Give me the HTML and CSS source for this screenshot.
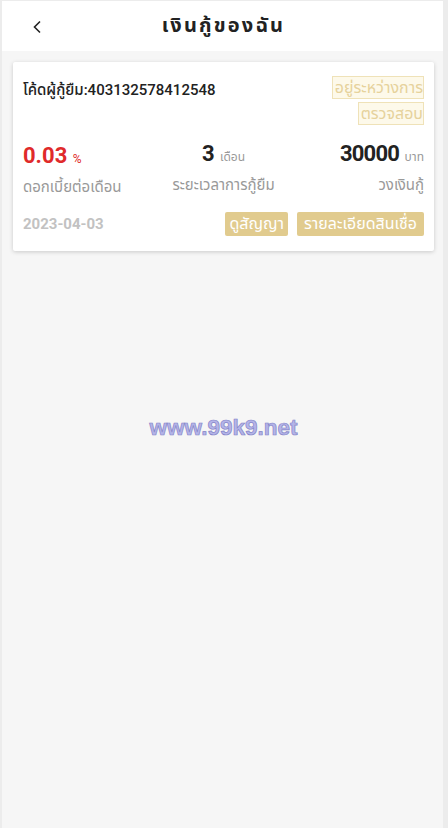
FILE: index.html
```html
<!DOCTYPE html>
<html lang="th">
<head>
<meta charset="utf-8">
<meta name="viewport" content="width=device-width, initial-scale=1">
<title>เงินกู้ของฉัน</title>
<link rel="stylesheet" href="styles.css">
</head>
<body>
<div class="app">
  <header class="topbar">
    <span class="back" aria-label="back">
      <svg width="12" height="14" viewBox="0 0 12 14"><path d="M8 1.5 L2.5 7 L8 12.5" fill="none" stroke="#222" stroke-width="1.6"/></svg>
    </span>
    <h1 class="title">เงินกู้ของฉัน</h1>
  </header>
  <main class="content">
    <section class="card">
      <div class="row-top">
        <div class="code">โค้ดผู้กู้ยืม:403132578412548</div>
        <div class="status"><span class="status-tag">อยู่ระหว่างการ<br>ตรวจสอบ</span></div>
      </div>
      <div class="stats">
        <div class="stat stat-left">
          <div class="stat-value red">0.03 <span class="unit">%</span></div>
          <div class="stat-label">ดอกเบี้ยต่อเดือน</div>
        </div>
        <div class="stat stat-mid">
          <div class="stat-value">3 <span class="unit">เดือน</span></div>
          <div class="stat-label">ระยะเวลาการกู้ยืม</div>
        </div>
        <div class="stat stat-right">
          <div class="stat-value"><span class="num">30000</span> <span class="unit">บาท</span></div>
          <div class="stat-label">วงเงินกู้</div>
        </div>
      </div>
      <div class="row-bottom">
        <div class="date">2023-04-03</div>
        <div class="actions">
          <span class="btn btn-narrow">ดูสัญญา</span>
          <span class="btn">รายละเอียดสินเชื่อ</span>
        </div>
      </div>
    </section>
    <div class="watermark">www.99k9.net</div>
  </main>
</div>
</body>
</html>
```
FILE: styles.css
```css
html, body {
  margin: 0;
  padding: 0;
}
body {
  background: #ececec;
  font-family: Roboto, "Noto Sans", "Noto Sans Thai", sans-serif;
  color: #222;
}
.app {
  margin: 1px 5px 0 2px;
  min-height: 827px;
  background: #f6f6f6;
  display: flex;
  flex-direction: column;
}
.topbar {
  height: 50px;
  background: #fff;
  display: flex;
  align-items: center;
  justify-content: center;
  position: relative;
}
.back {
  position: absolute;
  left: 30px;
  top: 19px;
  display: flex;
}
.title {
  margin: 0 0 0 2px;
  font-size: 20px;
  font-weight: 700;
  letter-spacing: 2.2px;
  color: #222;
}
.content {
  flex: 1;
  padding: 11px 9px 0 11px;
  display: flex;
  flex-direction: column;
}
.card {
  background: #fff;
  box-shadow: 0 1px 4px rgba(0,0,0,0.18);
  border-radius: 2px;
  padding: 13px 10px 15px 10px;
}
.row-top {
  display: flex;
  justify-content: space-between;
  align-items: flex-start;
}
.code {
  font-size: 15px;
  font-weight: 500;
  color: #222;
  line-height: 24px;
  padding-top: 3px;
}
.status {
  width: 100px;
  text-align: right;
  line-height: 26px;
}
.status-tag {
  font-size: 16px;
  color: #e6d29c;
  background: #fdf9ea;
  border: 1px solid #efe2b8;
  padding: 1px 0 1px 2px;
  -webkit-box-decoration-break: clone;
  box-decoration-break: clone;
}
.stats {
  display: grid;
  grid-template-columns: 1fr 1fr 1fr;
  margin-top: 14px;
}
.stat-mid { text-align: center; }
.stat-right { text-align: right; }
.stat-value {
  font-size: 22px;
  font-weight: 700;
  color: #222;
  line-height: 26px;
}
.num { letter-spacing: -0.8px; }
.stat-value.red { color: #e02a2a; }
.stat-left .stat-value { margin-top: 2px; }
.unit {
  font-size: 12px;
  font-weight: 400;
  color: #999;
}
.red .unit { color: #e02a2a; }
.stat-label {
  font-size: 15px;
  color: #999;
  margin-top: 5px;
  line-height: 20px;
}
.row-bottom {
  display: flex;
  justify-content: space-between;
  align-items: center;
  margin-top: 15px;
}
.date {
  font-size: 15px;
  font-weight: 700;
  color: #c2c2c2;
}
.actions {
  display: flex;
  gap: 9px;
}
.btn {
  background: #e1cb8e;
  color: #fff;
  font-size: 16px;
  line-height: 24px;
  padding: 0 7px;
  border-radius: 2px;
}
.btn-narrow {
  padding: 0 4px;
}
.watermark {
  margin-top: 164px;
  text-align: center;
  font-family: "Liberation Sans", Arial, sans-serif;
  font-weight: 700;
  font-size: 22.5px;
  color: #b4b4e8;
  -webkit-text-stroke: 0.7px #8585c8;
}
```
